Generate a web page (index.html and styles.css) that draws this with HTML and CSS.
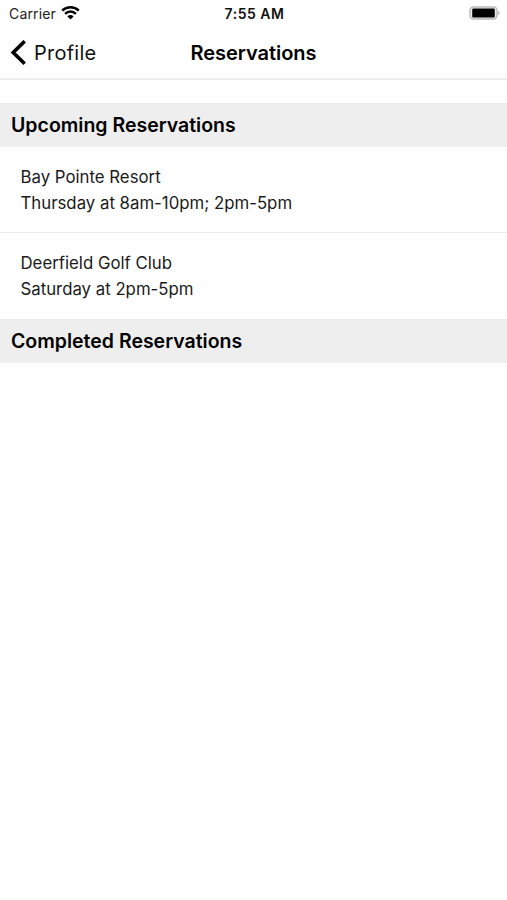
FILE: index.html
```html
<!DOCTYPE html>
<html lang="en">
<head>
    <meta charset="UTF-8">
    <meta name="viewport" content="width=device-width, initial-scale=1.0">
    <title>Reservations</title>
    <link rel="stylesheet" href="styles.css">
</head>
<body>
    <div class="statusBar">
        <div class="carrier">
            <span class="carrierName">Carrier</span>
            <svg class="wifi" width="19" height="14" viewBox="0 0 19 14">
                <path d="M1.2 4.7a11.8 11.8 0 0 1 16.6 0M4.1 7.8a7.7 7.7 0 0 1 10.8 0" fill="none" stroke="#000" stroke-width="2.5"/>
                <path d="M9.5 13.5L6.4 10.4a4.4 4.4 0 0 1 6.2 0z"/>
            </svg>
        </div>
        <span class="time">7:55 AM</span>
        <svg class="battery" width="31" height="14" viewBox="0 0 31 14">
            <rect x="1" y="1" width="27" height="12" rx="3.5" fill="#eee" stroke="#bbb" stroke-width="1.4"/>
            <rect x="3.2" y="2.6" width="22.6" height="8.8" rx="1.2"/>
            <path d="M29.3 5v4c1.7-.7 1.7-3.3 0-4z" fill="#aaa"/>
        </svg>
    </div>
    <header class="navBar">
        <a class="backBtn">
            <svg width="17" height="26" viewBox="0 0 17 26"><path d="M14.7 1.2L3.2 12.5l11.5 11.3" fill="none" stroke="#000" stroke-width="3.6"/></svg>
            <span class="backText">Profile</span>
        </a>
        <h1 class="title">Reservations</h1>
    </header>
    <main>
        <h2 class="sectionTitle">Upcoming Reservations</h2>
        <ul class="list">
            <li><p class="place">Bay Pointe Resort</p><p class="when">Thursday at 8am-10pm; 2pm-5pm</p></li>
            <li><p class="place">Deerfield Golf Club</p><p class="when">Saturday at 2pm-5pm</p></li>
        </ul>
        <h2 class="sectionTitle">Completed Reservations</h2>
    </main>
</body>
</html>
```
FILE: styles.css
```css
*{margin: 0; padding: 0; box-sizing: border-box;}
body{background-color: #fff; color: #000; font-family: Inter, "Liberation Sans", sans-serif;}
.statusBar{height: 26px; display: grid; grid-template-columns: 1fr auto 1fr; align-items: center; padding: 0 7px 0 9px;}
.carrier{display: flex; align-items: center; gap: 5px;}
.carrierName{font-size: 14px; letter-spacing: .15px; color: #222;}
.time{font-size: 14px; font-weight: 600; letter-spacing: .5px; color: #111;}
.battery{justify-self: end;}
.navBar{height: 54px; display: grid; grid-template-columns: 1fr auto 1fr; align-items: center; padding: 2px 10px 0; border-bottom: 2px solid #ececec;}
.backBtn{display: flex; align-items: center; gap: 7px; font-size: 20px; letter-spacing: .25px;}
.backText{color: #111;}
.title{font-size: 20px; font-weight: 600; letter-spacing: -.05px;}
.sectionTitle{height: 44px; line-height: 45px; padding-left: 11px; background-color: #eee; font-size: 19.5px; font-weight: 600;}
main{padding-top: 23px;}
.list{list-style: none;}
.list li{height: 86px; padding: 17px 20.5px; font-size: 16.8px; line-height: 26px; color: #1a1a1a;}
.list li:first-child{border-bottom: 1px solid #eee;}
```
